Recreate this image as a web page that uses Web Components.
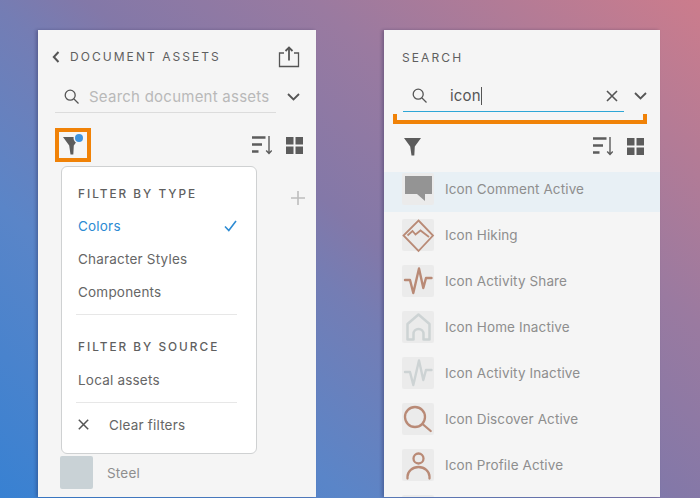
<!DOCTYPE html>
<html>
<head>
<meta charset="utf-8">
<title>Assets</title>
<style>
  html, body { margin: 0; height: 100%; }
  body {
    width: 700px; height: 498px; overflow: hidden;
    font-family: Inter, "Liberation Sans", sans-serif;
    background: linear-gradient(40deg, #3881d2 0%, #5a85c8 27%, #747db4 45%, #8378a8 52.5%, #9a7aa0 70%, #cc7c8c 100%);
  }
  #stage { display: flex; height: 498px; padding: 30px 0 1px 38px; box-sizing: border-box; gap: 68px; }
</style>
</head>
<body>
<div id="stage">
  <assets-panel>
    <panel-search slot="search" placeholder="Search document assets"></panel-search>
    <panel-tools slot="tools" flagged></panel-tools>
    <filter-menu slot="menu"></filter-menu>
    <asset-swatch slot="steel" color="#c9d2d6">Steel</asset-swatch>
  </assets-panel>
  <search-panel>
    <panel-search slot="search" value="icon"></panel-search>
    <panel-tools slot="tools"></panel-tools>
    <icon-row icon="comment" selected>Icon Comment Active</icon-row>
    <icon-row icon="hiking">Icon Hiking</icon-row>
    <icon-row icon="activity">Icon Activity Share</icon-row>
    <icon-row icon="home">Icon Home Inactive</icon-row>
    <icon-row icon="activity-off">Icon Activity Inactive</icon-row>
    <icon-row icon="discover">Icon Discover Active</icon-row>
    <icon-row icon="profile">Icon Profile Active</icon-row>
    <icon-row icon="none"></icon-row>
  </search-panel>
</div>
<script>
/* shared bits */
const PULSE = 'M3 15H8L11.300 28 17 3.500 21.300 23 24 13H29.500';
const ICONS = {
  comment: '<path d="M3 3H30V21H23V28L15 21H3Z" fill="#949494"/>',
  hiking: '<g fill="none" stroke="#b98a76" stroke-width="1.800"><path d="M16.500 1.500L31 16.500 16.500 32 1.500 16.500Z"/><path d="M5.500 16.500L10.500 12 13.500 15.500 18.500 11.500 27 18"/></g>',
  activity: `<path d="${PULSE}" fill="none" stroke="#b98a76" stroke-width="2.400" stroke-linecap="round" stroke-linejoin="round"/>`,
  'activity-off': `<path d="${PULSE}" fill="none" stroke="#cdd3d4" stroke-width="2.400" stroke-linecap="round" stroke-linejoin="round"/>`,
  home: '<path d="M5.500 28.500V13L16.500 3.500 27.500 13V28.500H21.500V23A5 5 0 0 0 11.500 23V28.500Z" fill="none" stroke="#cdd3d4" stroke-width="2.500" stroke-linejoin="round"/>',
  discover: '<g fill="none" stroke="#b98a76" stroke-width="2.300" stroke-linecap="round"><circle cx="13" cy="14" r="10"/><path d="M20.500 21L28.700 28"/></g>',
  profile: '<g fill="none" stroke="#b98a76" stroke-width="2.300" stroke-linecap="round"><circle cx="16.500" cy="9.500" r="5"/><path d="M5.500 29.500V27.500A11 9.500 0 0 1 27.500 27.500V29.500"/></g>',
  none: ''
};

function shell(el, html) {
  el.attachShadow({ mode: 'open' }).innerHTML = html;
}

class AssetsPanel extends HTMLElement {
  connectedCallback() {
    shell(this, `<style>
      :host { display: block; position: relative; width: 278px; height: 467px; background: #f5f5f5; box-shadow: -2px 0 3px rgba(30,30,70,.3); flex: none; }
      .head { display: flex; align-items: center; height: 30px; padding: 12px 16px 0 14px; color: #5f5f5f; }
      .head span { flex: 1; margin-left: 10px; font-size: 12px; letter-spacing: 2.05px; line-height: 30px; }
      .searchbox { padding: 9px 0 0 17px; }
      .tools { padding: 15px 0 0 17px; }
      .plus { display: flex; justify-content: flex-end; padding: 29px 11px 0 0; }
      .steel { padding: 251px 0 0 22px; }
      ::slotted([slot=menu]) { position: absolute; left: 23px; top: 136px; }
    </style>
    <div class="head">
      <svg width="8" height="12" viewBox="0 0 8 12"><path d="M6.500 1L1.800 6 6.500 11" fill="none" stroke="#555" stroke-width="2"/></svg>
      <span>DOCUMENT ASSETS</span>
      <svg width="22" height="22" viewBox="0 0 22 22" fill="none" stroke="#555" stroke-width="1.300"><path d="M6 7H1.500V20.500H20.500V7H16"/><path d="M11 14.500V2.500" stroke-width="1.800"/><path d="M7.500 5L11 1.500 14.500 5" stroke-width="1.800"/></svg>
    </div>
    <div class="searchbox"><slot name="search"></slot></div>
    <div class="tools"><slot name="tools"></slot></div>
    <div class="plus"><svg width="14" height="14" viewBox="0 0 14 14"><path d="M7 0V14M0 7H14" stroke="#bdbdbd" stroke-width="1.600"/></svg></div>
    <div class="steel"><slot name="steel"></slot></div>
    <slot name="menu"></slot>`);
  }
}

class SearchPanel extends HTMLElement {
  connectedCallback() {
    shell(this, `<style>
      :host { display: block; width: 276px; height: 467px; background: #f5f5f5; overflow: hidden; flex: none; box-shadow: -2px 0 3px rgba(30,30,70,.3); }
      .head { padding: 20px 0 0 18px; height: 16px; font-size: 12px; line-height: 16px; letter-spacing: 2.1px; color: #5f5f5f; }
      .searchbox { padding: 14px 0 0 19px; }
      .bracket { box-sizing: border-box; width: 254px; height: 10px; margin: 2px 0 0 9px; border: 4px solid #f08207; border-top: 0; }
      .tools { padding: 10px 0 0 19px; }
      .list { overflow: hidden; margin-top: 14px; }
      .scroll { margin-top: -6px; }
    </style>
    <div class="head">SEARCH</div>
    <div class="searchbox"><slot name="search"></slot></div>
    <div class="bracket"></div>
    <div class="tools"><slot name="tools"></slot></div>
    <div class="list"><div class="scroll"><slot></slot></div></div>`);
  }
}

class PanelSearch extends HTMLElement {
  connectedCallback() {
    const value = this.getAttribute('value');
    const ph = this.getAttribute('placeholder') || '';
    shell(this, `<style>
      :host { display: flex; align-items: center; width: 245px; height: 32px; font-size: 15px; color: #555; }
      .field { display: flex; align-items: center; box-sizing: border-box; width: 221px; height: 32px; border-bottom: 1px solid ${value ? '#2ea6d6' : '#dcdcdc'}; padding-left: 9px; }
      .txt { margin-left: ${value ? 23 : 10}px; flex: 1; letter-spacing: .2px; }
      .txt.ph { color: #b9b9b9; letter-spacing: .24px; }
      .caret { display: inline-block; width: 1px; height: 18px; background: #555; vertical-align: -4px; }
      .drop { margin-left: ${value ? 10 : 11}px; }
    </style>
    <div class="field">
      <svg width="15" height="15" viewBox="0 0 15 15" fill="none" stroke="#555" stroke-width="1.300"><circle cx="6.200" cy="6.200" r="5"/><path d="M10 10L14.500 14.500"/></svg>
      <span class="txt ${value ? '' : 'ph'}">${value ? value + '<i class="caret"></i>' : ph}</span>
      ${value ? '<svg width="12" height="12" viewBox="0 0 12 12" style="margin-right:6px"><path d="M1 1L11 11M11 1L1 11" stroke="#555" stroke-width="1.600"/></svg>' : ''}
    </div>
    <svg class="drop" width="13" height="8" viewBox="0 0 13 8"><path d="M1 1L6.500 6.500 12 1" fill="none" stroke="#555" stroke-width="1.800"/></svg>`);
  }
}

class PanelTools extends HTMLElement {
  connectedCallback() {
    const flagged = this.hasAttribute('flagged');
    shell(this, `<style>
      :host { display: flex; align-items: center; justify-content: space-between; width: ${flagged ? 248 : 241}px; height: ${flagged ? 34 : 24}px; }
      .filter { position: relative; display: flex; align-items: center; justify-content: center; box-sizing: border-box; width: ${flagged ? 36 : 19}px; height: ${flagged ? 34 : 24}px; ${flagged ? 'border: 4px solid #f08207; padding-right: 3px;' : ''} }
      .dot { position: absolute; right: 4px; top: 2px; width: 8px; height: 8px; border-radius: 50%; background: #3f93dc; box-shadow: 0 0 0 1.500px #f5f5f5; }
      .right { display: flex; align-items: center; gap: 14px; }
    </style>
    <div class="filter">
      <svg width="17" height="19" viewBox="0 0 17 19"><path d="M0 1H17L10.800 9.500 10.300 18.500H7.500L6.200 9.500Z" fill="#5c5c5c"/></svg>
      ${flagged ? '<i class="dot"></i>' : ''}
    </div>
    <div class="right">
      <svg width="20" height="20" viewBox="0 0 20 20"><path d="M0 2.500H13.500M0 9.500H10M0 16.500H6.500" stroke="#5c5c5c" stroke-width="2.300"/><path d="M17 1V18M14.200 15.500L17 18.500 19.800 15.500" fill="none" stroke="#5c5c5c" stroke-width="1.400"/></svg>
      <svg width="17" height="17" viewBox="0 0 17 17" fill="#5c5c5c"><rect width="7.500" height="7.500"/><rect x="9.500" width="7.500" height="7.500"/><rect y="9.500" width="7.500" height="7.500"/><rect x="9.500" y="9.500" width="7.500" height="7.500"/></svg>
    </div>`);
  }
}

class FilterMenu extends HTMLElement {
  connectedCallback() {
    shell(this, `<style>
      :host { display: block; box-sizing: border-box; width: 196px; height: 288px; background: #fff; border: 1.500px solid #cfd1d2; border-radius: 6px; padding: 17px 16px 0 16px; color: #666; font-size: 13.500px; letter-spacing: .2px; }
      h4 { margin: 0; font-size: 11.800px; line-height: 20px; font-weight: 500; letter-spacing: 2px; color: #5f5f5f; }
      .it { display: flex; justify-content: space-between; align-items: center; height: 33px; }
      .it.on { color: #2d8bd3; }
      .first { margin-top: 5px; }
      .rule { height: 1px; background: #e7e7e7; margin: 0 3px 0 -2px; }
      .clear { display: flex; align-items: center; height: 43px; gap: 20px; }
    </style>
    <h4>FILTER BY TYPE</h4>
    <div class="it on first">Colors
      <svg width="13" height="12" viewBox="0 0 13 12" style="margin-right:3px"><path d="M1 6.500L4.800 10.500 12 1" fill="none" stroke="#2d8bd3" stroke-width="1.600"/></svg>
    </div>
    <div class="it">Character Styles</div>
    <div class="it" style="margin-bottom:6px">Components</div>
    <div class="rule"></div>
    <h4 style="margin-top:22px">FILTER BY SOURCE</h4>
    <div class="it" style="margin-top:6px;margin-bottom:6px">Local assets</div>
    <div class="rule"></div>
    <div class="clear">
      <svg width="11" height="11" viewBox="0 0 11 11"><path d="M.8 .8L10.200 10.200M10.200 .8L.8 10.200" stroke="#555" stroke-width="1.500"/></svg>
      <span>Clear filters</span>
    </div>`);
  }
}

class AssetSwatch extends HTMLElement {
  connectedCallback() {
    shell(this, `<style>
      :host { display: flex; align-items: center; gap: 14px; height: 33px; font-size: 13.500px; color: #8e8e8e; letter-spacing: .2px; }
      i { display: block; width: 33px; height: 33px; border-radius: 2px; background: ${this.getAttribute('color')}; }
    </style><i></i><slot></slot>`);
  }
}

class IconRow extends HTMLElement {
  connectedCallback() {
    const sel = this.hasAttribute('selected');
    shell(this, `<style>
      :host { display: flex; align-items: center; gap: 11px; height: 46px; padding-left: 18px; box-sizing: border-box; font-size: 13.500px; letter-spacing: .12px; color: #8e8e8e; background: ${sel ? '#e8f0f5' : 'transparent'}; }
      .thumb { display: block; width: 32px; height: 32px; border-radius: 2px; background: #ebebeb; flex: none; }
      svg { display: block; overflow: visible; }
    </style>
    <span class="thumb"><svg width="32" height="32" viewBox="0 0 32 32">${ICONS[this.getAttribute('icon')]}</svg></span>
    <slot></slot>`);
  }
}

customElements.define('assets-panel', AssetsPanel);
customElements.define('search-panel', SearchPanel);
customElements.define('panel-search', PanelSearch);
customElements.define('panel-tools', PanelTools);
customElements.define('filter-menu', FilterMenu);
customElements.define('asset-swatch', AssetSwatch);
customElements.define('icon-row', IconRow);
</script>
</body>
</html>
